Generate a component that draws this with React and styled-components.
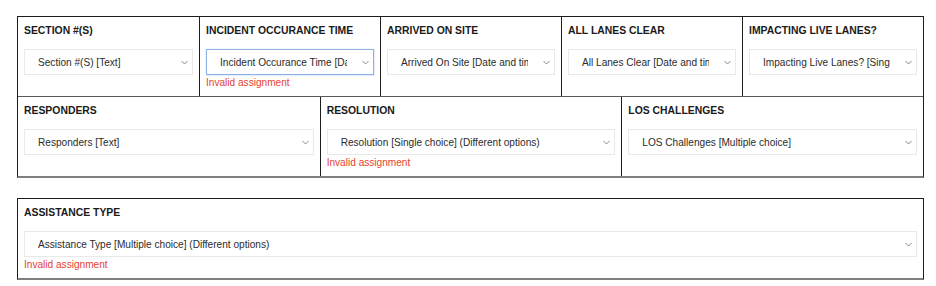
import styled, { createGlobalStyle, css } from "styled-components";

const GlobalStyle = createGlobalStyle`
  body {
    margin: 0;
    background: #ffffff;
    font-family: "Liberation Sans", Arial, Helvetica, sans-serif;
  }
`;

const Page = styled.div`
  padding: 16px 12px 0 17px;
  display: flex;
  flex-direction: column;
  gap: 20px;
`;

const Panel = styled.div`
  width: 907px;
  box-sizing: border-box;
  border: 1px solid #1c1c1c;
  border-bottom: 2px solid #7e7e7e;
`;

const Row = styled.div`
  display: grid;
  grid-template-columns: repeat(${(p) => p.$cols}, 1fr);
  & + & {
    border-top: 1px solid #5a5a5a;
  }
`;

const Cell = styled.div`
  min-width: 0;
  padding: 7px 6px;
  display: flex;
  flex-direction: column;
  & + & {
    border-left: 1px solid #1c1c1c;
  }
`;

const Label = styled.div`
  font-size: 10.4px;
  line-height: 14px;
  font-weight: 700;
  color: #1a1a1a;
  white-space: nowrap;
  margin-bottom: 11px;
`;

const SelectBox = styled.div`
  height: 26px;
  box-sizing: border-box;
  border: 1px solid #e9e9e9;
  background: #fff;
  display: flex;
  align-items: center;
  padding: 0 4px 0 13px;
  ${(p) =>
    p.$focused &&
    css`
      border-color: #8db3e6;
      box-shadow: 0 0 1.5px 0.5px rgba(110, 160, 225, 0.55);
    `}
`;

const Value = styled.span`
  flex: 1;
  min-width: 0;
  overflow: hidden;
  white-space: nowrap;
  font-size: 10.1px;
  color: #2b2b2b;
  margin-right: 15px;
`;

const Chevron = styled.svg`
  flex: none;
  width: 7px;
  height: 5px;
`;

const Error = styled.div`
  font-size: 10.1px;
  line-height: 13px;
  margin-top: 1px;
  color: #e5432f;
`;

const Field = ({ label, value, invalid, focused }) => (
  <Cell>
    <Label>{label}</Label>
    <SelectBox $focused={focused}>
      <Value>{value}</Value>
      <Chevron viewBox="0 0 7 5">
        <path d="M0.5 1 L3.5 4 L6.5 1" fill="none" stroke="#7a7a7a" strokeWidth="0.9" />
      </Chevron>
    </SelectBox>
    {invalid && <Error>Invalid assignment</Error>}
  </Cell>
);

const topFields = [
  { label: "SECTION #(S)", value: "Section #(S) [Text]" },
  { label: "INCIDENT OCCURANCE TIME", value: "Incident Occurance Time [Date and time]", invalid: true, focused: true },
  { label: "ARRIVED ON SITE", value: "Arrived On Site [Date and time]" },
  { label: "ALL LANES CLEAR", value: "All Lanes Clear [Date and time]" },
  { label: "IMPACTING LIVE LANES?", value: "Impacting Live Lanes? [Single choice]" },
];

const middleFields = [
  { label: "RESPONDERS", value: "Responders [Text]" },
  { label: "RESOLUTION", value: "Resolution [Single choice] (Different options)", invalid: true },
  { label: "LOS CHALLENGES", value: "LOS Challenges [Multiple choice]" },
];

export default function App() {
  return (
    <>
      <GlobalStyle />
      <Page>
        <Panel>
          <Row $cols={5}>
            {topFields.map((f) => (
              <Field key={f.label} {...f} />
            ))}
          </Row>
          <Row $cols={3}>
            {middleFields.map((f) => (
              <Field key={f.label} {...f} />
            ))}
          </Row>
        </Panel>
        <Panel>
          <Row $cols={1}>
            <Field
              label="ASSISTANCE TYPE"
              value="Assistance Type [Multiple choice] (Different options)"
              invalid
            />
          </Row>
        </Panel>
      </Page>
    </>
  );
}
